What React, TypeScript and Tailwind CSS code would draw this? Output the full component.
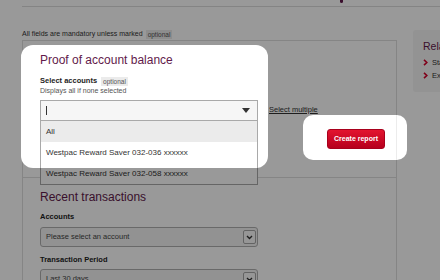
import React from "react";

function Triangle() {
  return (
    <svg width="8" height="5" viewBox="0 0 8 5" className="block">
      <path d="M0 0H8L4 5Z" fill="#333" />
    </svg>
  );
}

function SmallChevron() {
  return (
    <svg width="7" height="5" viewBox="0 0 7 5" className="block">
      <path d="M1 1L3.5 3.5L6 1" fill="none" stroke="#333" strokeWidth="1.4" />
    </svg>
  );
}

function RedChevron() {
  return (
    <svg width="5" height="7" viewBox="0 0 5 7" className="block shrink-0">
      <path d="M1 0.8L3.8 3.5L1 6.2" fill="none" stroke="#d5002b" strokeWidth="1.6" />
    </svg>
  );
}

export default function App() {
  return (
    <div className="relative w-[440px] h-[280px] overflow-hidden bg-white font-['Liberation_Sans',Arial,sans-serif] text-[#333]">
      {/* header strip */}
      <div className="ml-[22px] h-[7px] border-b border-[#dcdcdc] flex">
        <span className="ml-[318px] w-[3px] h-[3px] bg-[#621a4b] rounded-b-full" />
      </div>

      <div className="flex items-start">
        {/* main column */}
        <div className="ml-[22px] w-[375px] shrink-0">
          <p className="mt-[22px] h-[10px] text-[7px] leading-[10px] flex items-center gap-[3px] whitespace-nowrap">
            All fields are mandatory unless marked
            <span className="bg-[#ebebeb] text-[#555] px-[2px] text-[6.5px] leading-[9px]">optional</span>
          </p>

          <div className="mt-px border border-b-0 border-[#dedede] h-[240px]">
            {/* Proof of account balance */}
            <div className="flex h-[136px]">
              <div className="relative z-20 -ml-[2px] mt-[4px] w-[247px] h-[123px] shrink-0 rounded-[12px] bg-white pl-[19px] pt-[8px]">
                <h2 className="text-[12px] leading-[14px] text-[#621a4b] whitespace-nowrap">Proof of account balance</h2>
                <div className="mt-[9px] flex items-center gap-[4px] whitespace-nowrap">
                  <span className="text-[7.5px] leading-[10px] font-bold text-[#222]">Select accounts</span>
                  <span className="bg-[#ebebeb] text-[#555] px-[2px] text-[6.5px] leading-[9px]">optional</span>
                </div>
                <p className="text-[7px] leading-[9px] text-[#555] whitespace-nowrap">Displays all if none selected</p>

                <div className="relative mt-[5px] w-[218px]">
                  <div className="h-[21px] border border-[#a9a9a9] bg-[#f6f6f6] flex items-center justify-between pl-[5px] pr-[7px]">
                    <span className="w-px h-[9px] bg-[#333]" />
                    <Triangle />
                  </div>
                  <div className="absolute left-0 top-[21px] w-[218px] border border-t-0 border-[#a9a9a9] bg-white text-[8px] text-[#333] whitespace-nowrap">
                    <div className="h-[21px] flex items-center pl-[5px] bg-[#ebebeb]">All</div>
                    <div className="h-[21px] flex items-center pl-[5px]">Westpac Reward Saver 032-036 xxxxxx</div>
                    <div className="h-[21px] flex items-center pl-[5px]">Westpac Reward Saver 032-058 xxxxxx</div>
                  </div>
                  <div className="absolute left-0 right-0 top-[68px] h-[17px] bg-black/40" />
                </div>
              </div>

              <div className="flex flex-col">
                <a className="ml-[1px] mt-[64px] text-[7.5px] leading-[10px] underline text-[#333] whitespace-nowrap">Select multiple</a>
                <div className="relative z-20 ml-[35px] w-[104px] h-[45px] rounded-[10px] bg-white flex items-start">
                  <button className="ml-[24px] mt-[14px] w-[58px] h-[20px] rounded-[3px] border border-[#a8001c] bg-gradient-to-b from-[#e3142f] to-[#b6001d] text-white text-[7px] font-bold whitespace-nowrap">
                    Create report
                  </button>
                  <span className="ml-[11px] w-px self-stretch bg-[#ececec]" />
                </div>
              </div>
            </div>

            {/* Recent transactions */}
            <div className="border-t border-[#dedede] pl-[17px] pt-[12px]">
              <h2 className="text-[12px] leading-[14px] text-[#621a4b] whitespace-nowrap">Recent transactions</h2>
              <p className="mt-[8px] text-[7.5px] leading-[10px] font-bold text-[#222]">Accounts</p>
              <div className="mt-[5px] w-[218px] h-[20px] rounded-[3px] border border-[#b0b0b0] bg-[#f3f3f3] flex items-center justify-between pl-[5px] pr-[1px]">
                <span className="text-[7.5px] text-[#444] whitespace-nowrap">Please select an account</span>
                <span className="w-[13px] h-[14px] rounded-[2px] border border-[#a5a5a5] bg-[#fbfbfb] flex items-center justify-center">
                  <SmallChevron />
                </span>
              </div>
              <p className="mt-[8px] text-[7.5px] leading-[10px] font-bold text-[#222]">Transaction Period</p>
              <div className="mt-[4px] w-[218px] h-[20px] rounded-[3px] border border-[#b0b0b0] bg-[#f3f3f3] flex items-center justify-between pl-[5px] pr-[1px]">
                <span className="text-[7.5px] text-[#444] whitespace-nowrap">Last 30 days</span>
                <span className="w-[13px] h-[14px] rounded-[2px] border border-[#a5a5a5] bg-[#fbfbfb] flex items-center justify-center">
                  <SmallChevron />
                </span>
              </div>
            </div>
          </div>
        </div>

        {/* sidebar */}
        <aside className="ml-[16px] mt-[23px] w-[80px] h-[62px] shrink-0 rounded-[3px] bg-[#f5f5f5] pl-[10px] pt-[10px] whitespace-nowrap">
          <h3 className="text-[10.5px] leading-[13px] text-[#621a4b]">Related links</h3>
          <ul className="mt-[3px] text-[7.5px] leading-[13px] text-[#333]">
            <li className="flex items-center gap-[4px]"><RedChevron />Statements</li>
            <li className="flex items-center gap-[4px]"><RedChevron />Export transactions</li>
          </ul>
        </aside>
      </div>

      {/* dimming overlay */}
      <div className="absolute inset-0 z-10 bg-black/40" />
    </div>
  );
}
